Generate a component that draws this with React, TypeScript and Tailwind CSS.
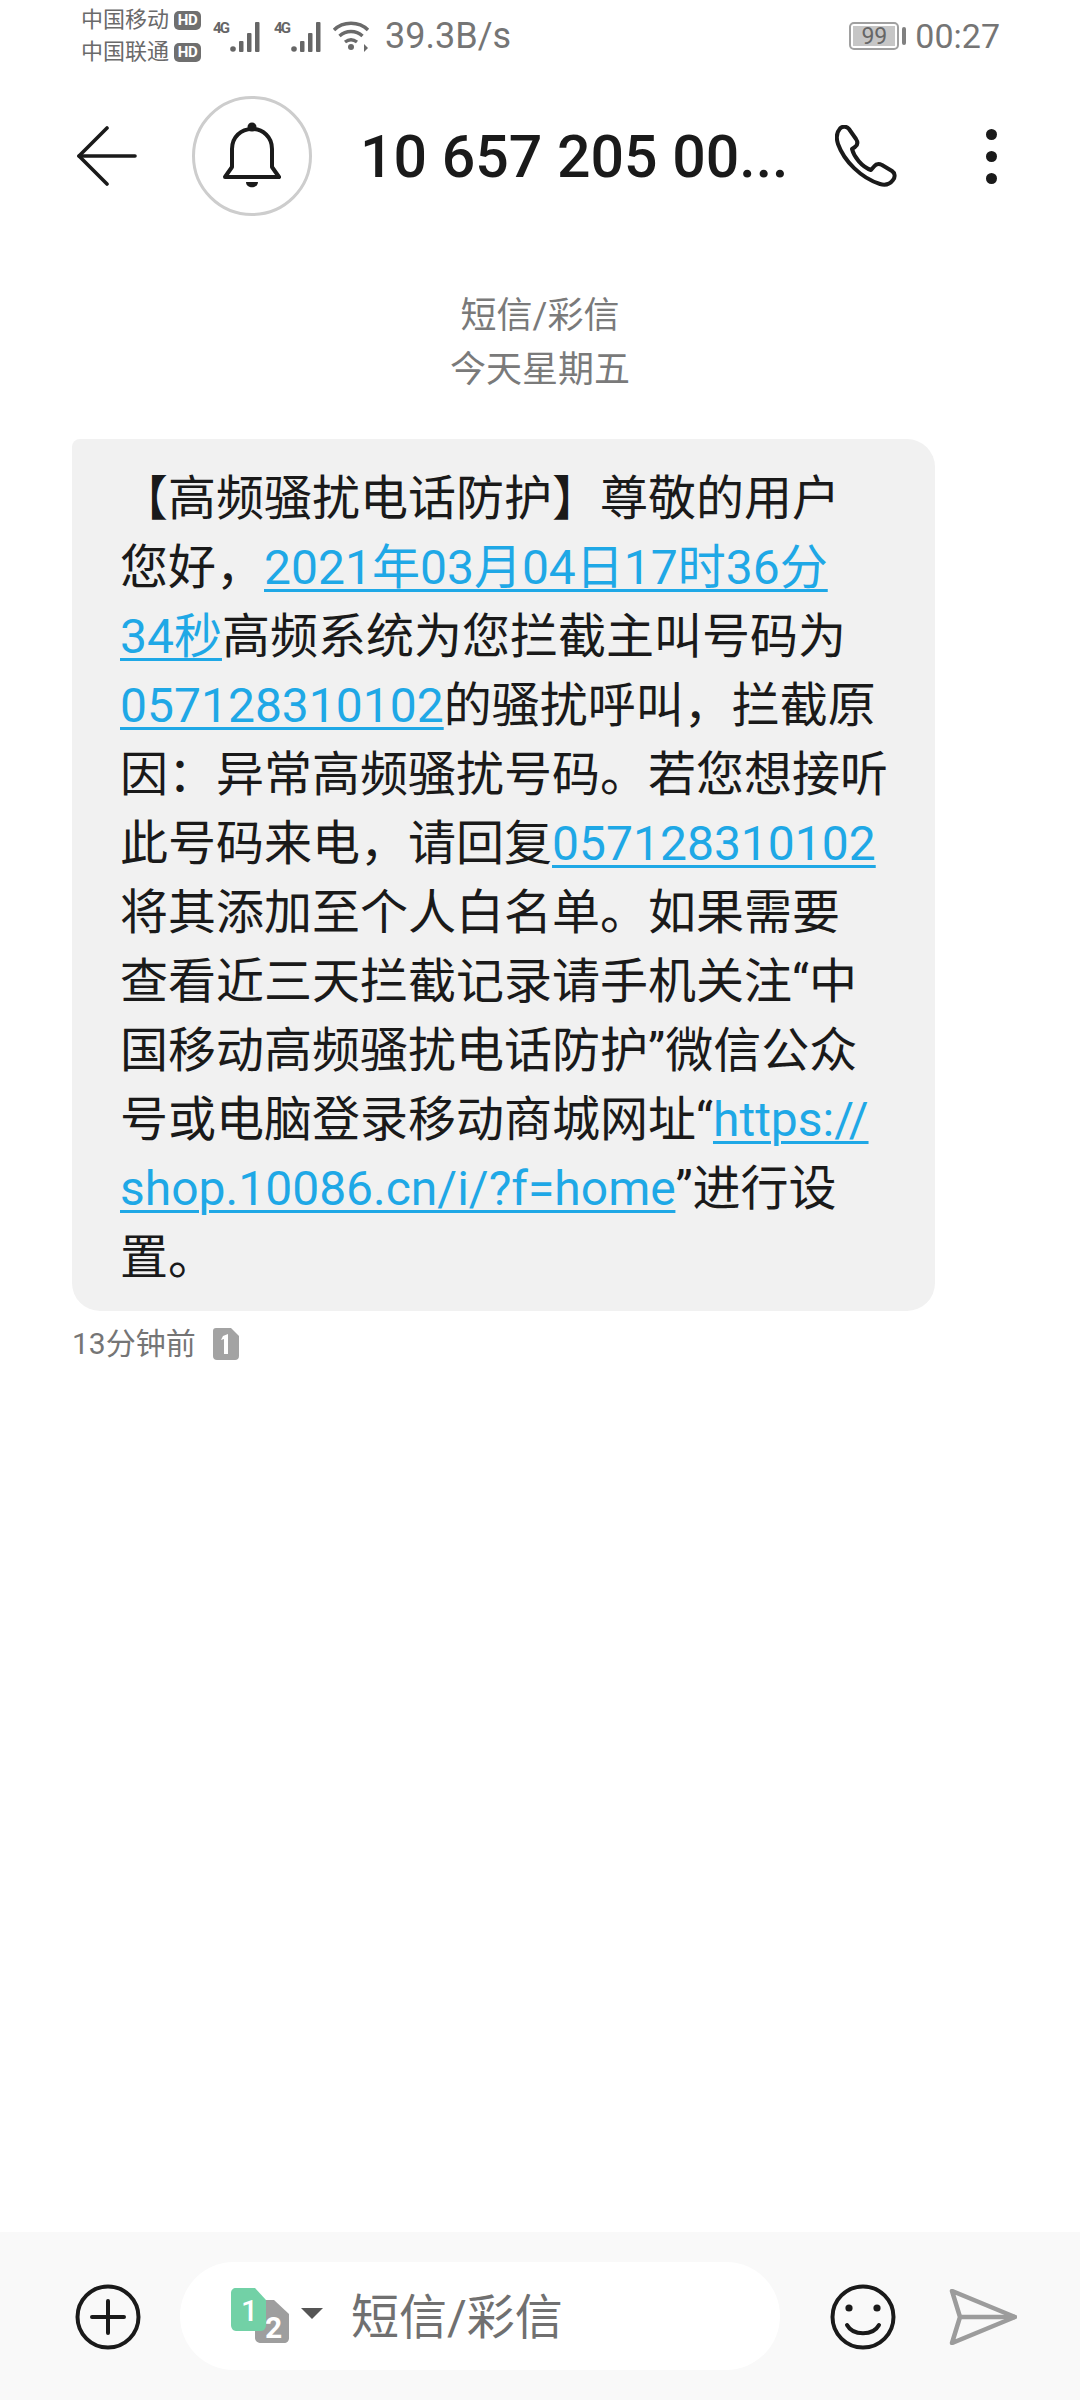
import React from "react";

const CJK = "font-['Roboto','Noto_Sans_CJK_SC',sans-serif]";

function Hd() {
  return (
    <span className="flex h-[19px] w-[27px] items-center justify-center rounded-[5px] bg-[#6f6f6f] text-[15px] font-bold leading-none tracking-[-0.5px] text-white">
      HD
    </span>
  );
}

function Signal() {
  return (
    <svg width="49" height="34" viewBox="0 0 49 34" className="block">
      <text x="0" y="14" fontSize="15" fontWeight="700" fill="#666" fontFamily="Roboto" textLength="17">4G</text>
      <g fill="#666">
        <circle cx="20" cy="30" r="2.8" />
        <rect x="26" y="22" width="4.5" height="11" rx="1" />
        <rect x="34" y="14" width="4.5" height="19" rx="1" />
        <rect x="42" y="3" width="4.5" height="30" rx="1" />
      </g>
    </svg>
  );
}

function Link({ children }: { children: React.ReactNode }) {
  return <span className="text-[#1fa8e6] underline decoration-[3px] underline-offset-[5px]">{children}</span>;
}

export default function App() {
  return (
    <div className={`flex h-[2400px] w-[1080px] flex-col overflow-hidden bg-white ${CJK}`}>
      {/* status bar */}
      <div className="flex h-[64px] shrink-0 items-center pl-[81px] pr-[80px] pt-[8px] text-[#6a6a6a]">
        <div className="flex flex-col gap-[8px]">
          <div className="flex h-[24px] items-center gap-[5px] text-[22px] leading-none">中国移动<Hd /></div>
          <div className="flex h-[24px] items-center gap-[5px] text-[22px] leading-none">中国联通<Hd /></div>
        </div>
        <div className="ml-[12px] flex gap-[12px]">
          <Signal />
          <Signal />
        </div>
        <svg width="38" height="34" viewBox="0 0 38 34" fill="none" stroke="#6a6a6a" strokeWidth="3.4" className="ml-[9px]">
          <path d="M2 11 C11 2 27 2 36 11" />
          <path d="M7.5 17 C14 11 24 11 30.5 17" />
          <path d="M13 23 C17 20 21 20 25 23" />
          <circle cx="19" cy="28" r="3" fill="#6a6a6a" stroke="none" />
          <path d="M32 25 l4 4 -4 4 z" fill="#6a6a6a" stroke="none" />
        </svg>
        <span className="ml-[15px] text-[36px] leading-none text-[#757575]">39.3B/s</span>
        <div className="ml-auto flex items-center">
          <div className="flex h-[28px] w-[50px] items-center justify-center rounded-[5px] border-2 border-[#a0a0a0] p-[2px]">
            <span className="flex h-full w-full items-center justify-center bg-[#c6c6c6] text-[23px] leading-none text-[#666]">99</span>
          </div>
          <span className="ml-[3px] h-[18px] w-[4px] rounded-[2px] bg-[#808080]" />
          <span className="ml-[9px] text-[34px] leading-none text-[#757575]">00:27</span>
        </div>
      </div>

      {/* header */}
      <div className="flex h-[182px] shrink-0 items-center pl-[77px] pt-[2px]">
        <svg width="60" height="60" viewBox="0 0 60 60" fill="none" stroke="#1a1a1a" strokeWidth="3.6" strokeLinecap="round" strokeLinejoin="round" className="shrink-0">
          <path d="M30 2 L2 30 L30 58" />
          <path d="M2 30 H58" />
        </svg>
        <div className="ml-[55px] flex h-[120px] w-[120px] shrink-0 items-center justify-center rounded-full border-[3px] border-[#cdcdcd]">
          <svg width="58" height="68" viewBox="0 0 58 68" fill="none" stroke="#1a1a1a" strokeWidth="4" strokeLinejoin="round">
            <path d="M2 55 L9 45 V27 C9 15 18 7 29 7 C40 7 49 15 49 27 V45 L56 55 Z" />
            <circle cx="29" cy="5" r="4.5" fill="#1a1a1a" stroke="none" />
            <path d="M23 60 H35 C35 67 23 67 23 60 Z" fill="#1a1a1a" stroke="none" />
          </svg>
        </div>
        <span className="ml-[48px] w-[462px] shrink-0 whitespace-nowrap text-[59px] font-medium leading-none text-[#1a1a1a]">10 657 205 00...</span>
        <svg width="62" height="62" viewBox="0 0 62 62" fill="none" stroke="#1a1a1a" strokeWidth="4" strokeLinejoin="round" className="ml-[13px] shrink-0">
          <path d="M5 3.5 C8 0.5 12 1.5 14 4 L21 14 C23 17 22.5 20 20 22 L17 24 C19 32 27 42 36 45 L39 41.5 C41 39 44 38.5 47 40 L57 46 C60 48 60.5 52 58 55 C55 59 50 60.5 45 59 C26 53 9 36 3 19 C1 13 2 7 5 3.5 Z" />
        </svg>
        <div className="ml-[89px] flex shrink-0 flex-col gap-[11px]">
          <span className="h-[11px] w-[11px] rounded-full bg-[#1a1a1a]" />
          <span className="h-[11px] w-[11px] rounded-full bg-[#1a1a1a]" />
          <span className="h-[11px] w-[11px] rounded-full bg-[#1a1a1a]" />
        </div>
      </div>

      {/* date */}
      <div className="mt-[43px] flex shrink-0 flex-col items-center text-[36px] leading-[54px] text-[#7a7a7a]">
        <span>短信/彩信</span>
        <span>今天星期五</span>
      </div>

      {/* bubble */}
      <div className="ml-[72px] mt-[42px] h-[872px] w-[863px] shrink-0 rounded-[28px] rounded-tl-[8px] bg-[#f1f1f1] pl-[48px] pt-[25px] text-[48px] leading-[69px] text-[#1a1a1a] whitespace-nowrap">
        【高频骚扰电话防护】尊敬的用户<br />
        您好，<Link>2021年03月04日17时36分</Link><br />
        <Link>34秒</Link>高频系统为您拦截主叫号码为<br />
        <Link>057128310102</Link>的骚扰呼叫，拦截原<br />
        因：异常高频骚扰号码。若您想接听<br />
        此号码来电，请回复<Link>057128310102</Link><br />
        将其添加至个人白名单。如果需要<br />
        查看近三天拦截记录请手机关注“中<br />
        国移动高频骚扰电话防护”微信公众<br />
        号或电脑登录移动商城网址“<Link>https://</Link><br />
        <Link>shop.10086.cn/i/?f=home</Link>”进行设<br />
        置。
      </div>

      {/* meta */}
      <div className="ml-[72px] mt-[15px] flex shrink-0 items-center text-[30px] leading-[36px] text-[#757575]">
        <span>13分钟前</span>
        <svg width="28" height="34" viewBox="0 0 28 34" className="ml-[16px]">
          <path d="M4 1 H19 L27 9 V29 C27 31.5 25.5 33 23 33 H5 C2.5 33 1 31.5 1 29 V4 C1 2 2 1 4 1 Z" fill="#a3a3a3" />
          <path d="M11 9 L16 7 V27 H12 V12 L9 13 Z" fill="#fff" />
        </svg>
      </div>

      {/* composer */}
      <div className="mt-auto flex h-[168px] shrink-0 items-center bg-[#f9f9f9] pb-[1px] pl-[75px]">
        <svg width="66" height="66" viewBox="0 0 66 66" fill="none" stroke="#1a1a1a" strokeWidth="4" strokeLinecap="round" className="mt-[3px] shrink-0">
          <circle cx="33" cy="33" r="30.5" />
          <path d="M17 33 H49 M33 17 V49" />
        </svg>
        <div className="ml-[39px] flex h-[108px] w-[600px] shrink-0 items-center rounded-full bg-white pl-[51px]">
          <svg width="60" height="56" viewBox="0 0 60 56" className="shrink-0">
            <path d="M26 12 H43 L58 26 V50 C58 53 56 55 53 55 H30 C27 55 24 53 24 50 V15 Z" fill="#9e9e9e" />
            <text x="34" y="50" fontSize="30" fontWeight="700" fill="#fff" fontFamily="Roboto">2</text>
            <path d="M5 0 H24 L35 12 V37 C35 40 33 43 30 43 H5 C2 43 0 40 0 37 V5 C0 2 2 0 5 0 Z" fill="#72d1a6" />
            <text x="10" y="33" fontSize="30" fontWeight="500" fill="#fff" fontFamily="Roboto">1</text>
          </svg>
          <svg width="22" height="12" viewBox="0 0 22 12" className="ml-[10px] mt-[-4px] shrink-0">
            <path d="M0 0 H22 L11 11 Z" fill="#555" />
          </svg>
          <span className="ml-[28px] mt-[5px] whitespace-nowrap text-[48px] leading-none text-[#707070]">短信/彩信</span>
        </div>
        <svg width="66" height="66" viewBox="0 0 66 66" fill="none" stroke="#1a1a1a" strokeWidth="4" strokeLinecap="round" className="ml-[50px] mt-[3px] shrink-0">
          <circle cx="33" cy="33" r="30.5" />
          <circle cx="19" cy="24" r="3.6" fill="#1a1a1a" stroke="none" />
          <circle cx="47" cy="24" r="3.6" fill="#1a1a1a" stroke="none" />
          <path d="M17 41 C23 52 43 52 49 41" />
        </svg>
        <svg width="68" height="56" viewBox="0 0 68 56" fill="none" stroke="#9c9c9c" strokeWidth="4.5" strokeLinejoin="round" className="ml-[53px] mt-[3px] shrink-0">
          <path d="M3 2 L66 28 L3 54 L11 28 Z" />
          <path d="M11 28 H66" />
        </svg>
      </div>
    </div>
  );
}
